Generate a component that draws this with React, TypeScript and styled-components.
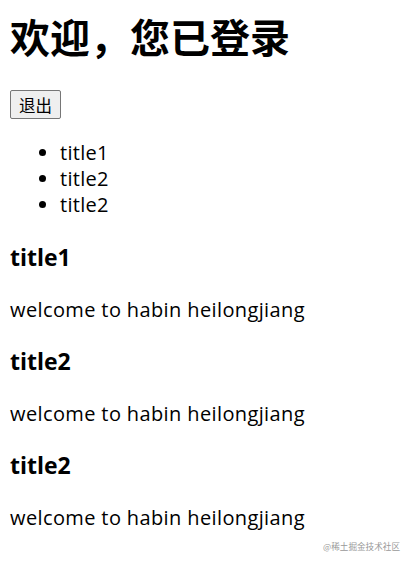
import * as React from 'react';
import styled, { createGlobalStyle } from 'styled-components';

const GlobalStyle = createGlobalStyle`
  html, body {
    background: #fff;
  }
  body {
    margin: 0;
    padding: 10px 10px 10px;
    font-family: 'Open Sans', 'Noto Sans CJK SC', sans-serif;
    font-size: 20px;
    line-height: 26px;
    color: #000;
  }
`;

const posts = [
  { id: 1, title: 'title1', content: 'welcome to habin heilongjiang' },
  { id: 2, title: 'title2', content: 'welcome to habin heilongjiang' },
  { id: 3, title: 'title2', content: 'welcome to habin heilongjiang' },
];

const App = () => (
  <Page>
    <GlobalStyle />
    <Title>欢迎，您已登录</Title>
    <LogoutButton type="button">退出</LogoutButton>
    <TitleList>
      {posts.map((post) => (
        <TitleItem key={post.id}>{post.title}</TitleItem>
      ))}
    </TitleList>
    {posts.map((post) => (
      <Post key={post.id}>
        <PostTitle>{post.title}</PostTitle>
        <PostBody>{post.content}</PostBody>
      </Post>
    ))}
    <Watermark>@稀土掘金技术社区</Watermark>
  </Page>
);

export default App;

const Page = styled.div`
  min-height: 540px;
`;

const Title = styled.h1`
  margin: 0 0 27px;
  font-size: 40px;
  line-height: 53px;
  font-weight: 700;
  font-family: 'Noto Sans CJK SC', sans-serif;
`;

const LogoutButton = styled.button`
  display: block;
  height: 29px;
  padding: 0 8px;
  font-family: 'Noto Sans CJK SC', sans-serif;
  font-size: 16.5px;
  color: #000;
  background: #efefef;
  border: 1px solid #767676;
  border-radius: 2px;
`;

const TitleList = styled.ul`
  margin: 21px 0 24px;
  padding-left: 50px;
`;

const TitleItem = styled.li`
  line-height: 26px;
  letter-spacing: 0.3px;
`;

const Post = styled.section``;

const PostTitle = styled.h3`
  margin: 23.5px 0;
  font-size: 23px;
  line-height: 31px;
  font-weight: 700;
`;

const PostBody = styled.p`
  margin: 23.5px 0;
  line-height: 26px;
  letter-spacing: 0.38px;
`;

const Watermark = styled.div`
  position: absolute;
  right: 12px;
  bottom: 13px;
  font-family: 'Noto Sans CJK SC', sans-serif;
  font-size: 8.6px;
  line-height: 12px;
  color: #999;
`;
